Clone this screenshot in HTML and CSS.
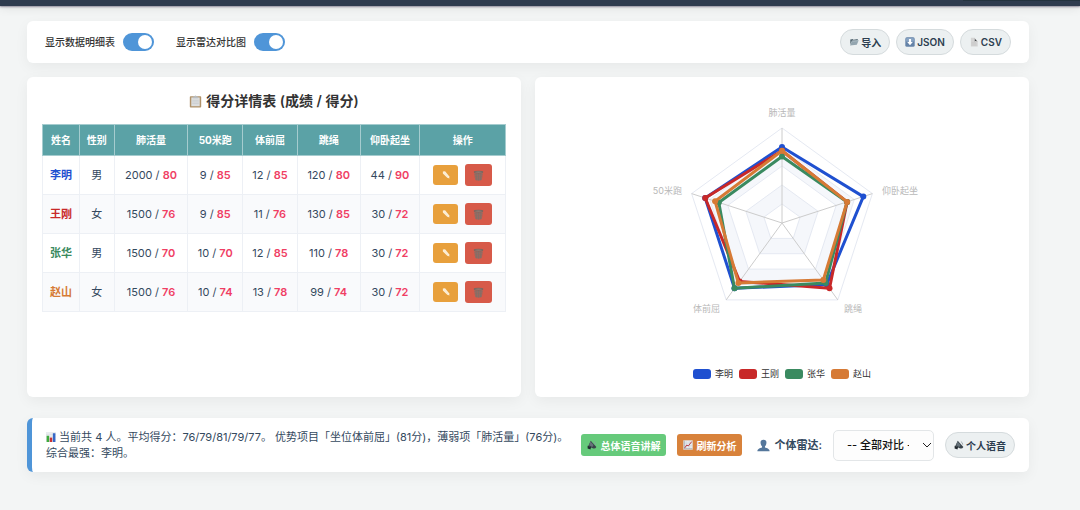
FILE: index.html
```html
<!DOCTYPE html>
<html lang="zh-CN">
<head>
  <meta charset="UTF-8">
  <meta name="viewport" content="width=device-width, initial-scale=1.0">
  <title>得分详情表</title>
  <link rel="stylesheet" href="styles.css">
</head>
<body>
  <!-- Shared icons -->
  <svg class="sprite" aria-hidden="true">
    <symbol id="icon-folder" viewBox="0 0 16 16">
      <path d="M2 4 L6 3 L7 4.500 L14 3 V6 H5 L2 12 Z" fill="#566974"/>
      <path d="M5 6 L15.500 5 L12.500 12.500 L1.500 13.500 Z" fill="#93a5af"/>
      <path d="M5.500 6.800 L14.500 6" stroke="#c3d0d7" stroke-width="0.800"/>
    </symbol>
    <symbol id="icon-down" viewBox="0 0 16 16">
      <rect x="0.500" y="0.500" width="15" height="15" rx="2.500" fill="#6583a8"/>
      <rect x="1.500" y="1.500" width="13" height="6" rx="2" fill="#86a2c2"/>
      <path d="M6.300 3 H9.700 V8 H12.500 L8 13 L3.500 8 H6.300 Z" fill="#fff"/>
    </symbol>
    <symbol id="icon-doc" viewBox="0 0 16 16">
      <path d="M3 1 H9 L14 7 V15 H3 Z" fill="#d4d4d4"/>
      <path d="M8 1 C10 2 9.500 5 9 7 C11 6 13 6.500 14 8 Z" fill="#3f4346"/>
      <path d="M4 9 H11 M4 11 H12 M4 13 H12" stroke="#c4c4c4" stroke-width="0.800"/>
    </symbol>
    <symbol id="icon-clipboard" viewBox="0 0 16 16">
      <rect x="1" y="1.500" width="14" height="14" rx="1" fill="#b0926a"/>
      <rect x="2.800" y="3" width="10.400" height="10.800" fill="#dcdedf"/>
      <path d="M4 6.500 H12 M4 8.500 H12 M4 10.500 H12" stroke="#c3c6c9" stroke-width="0.700"/>
      <path d="M5 1.800 H6.500 Q8 -0.500 9.500 1.800 H11 V4 H5 Z" fill="#b9bdc0"/>
    </symbol>
    <symbol id="icon-pencil" viewBox="0 0 16 16">
      <path d="M3 2.500 L6.500 2 L13 10 L13.500 13.500 L10 12.500 L3 5.500 Z" fill="#fdf0da"/>
      <path d="M5 4 L11.500 11.500" stroke="#f7e2bd" stroke-width="0.800"/>
    </symbol>
    <symbol id="icon-trash" viewBox="0 0 16 16">
      <path d="M1.500 3 H14.500 L12.800 14.500 Q8 16.500 3.200 14.500 Z" fill="#a5685e"/>
      <path d="M4.500 4.500 L5.300 15 M8 5 V15.500 M11.500 4.500 L10.700 15 M2 7 H14 M2.500 10 H13.500 M3 13 H13" stroke="#7d716b" stroke-width="1" fill="none"/>
      <ellipse cx="8" cy="3" rx="7" ry="2" fill="#75665f"/>
      <ellipse cx="8" cy="3" rx="5.200" ry="0.900" fill="#9b7c73"/>
    </symbol>
    <symbol id="icon-bars" viewBox="0 0 16 16">
      <rect width="16" height="16" fill="#e9ecef"/>
      <path d="M0 4 H16 M0 8 H16 M0 12 H16" stroke="#d2d7dc" stroke-width="0.600"/>
      <rect x="1" y="6" width="4" height="10" fill="#3eab3d"/>
      <rect x="6" y="9" width="4" height="7" fill="#c93434"/>
      <rect x="11" y="2" width="4" height="14" fill="#3568c9"/>
    </symbol>
    <symbol id="icon-speaker" viewBox="0 0 16 16">
      <path d="M6 1 L15 11 Q13 14.500 9 13 L2 9.500 Z" fill="#3a444b"/>
      <path d="M5.500 2.500 L10.500 8 L8.500 11 L3.500 8.500 Z" fill="#66727a"/>
      <path d="M1 9 L6.500 11 L5.500 15 L1 13.500 Z" fill="#20282e"/>
      <path d="M11 2.500 Q14 4 14 7.500" stroke="#8f9a9f" stroke-width="1.300" fill="none"/>
    </symbol>
    <symbol id="icon-trend" viewBox="0 0 16 16">
      <rect x="0.500" y="0.500" width="15" height="15" fill="#e6e9ec"/>
      <path d="M1 5 H15 M1 9 H15 M5 1 V15 M10 1 V15" stroke="#c5cbd1" stroke-width="0.600"/>
      <path d="M2 1 V14 H15" stroke="#8d959c" stroke-width="1" fill="none"/>
      <path d="M2.500 13 L6 8 L8.500 9.500 L14 2.500" stroke="#b9343c" stroke-width="1.500" fill="none"/>
    </symbol>
    <symbol id="icon-person" viewBox="0 0 16 16">
      <path d="M8 1 C11 1 12 3 11.500 5.500 C11.200 7.500 10.500 8.300 9.800 9 V10.500 C12.500 11.500 15.500 12 15.500 15 H0.500 C0.500 12 3.500 11.500 6.200 10.500 V9 C5.500 8.300 4.800 7.500 4.500 5.500 C4 3 5 1 8 1 Z" fill="#55779b"/>
    </symbol>
  </svg>

  <header class="topbar"><span class="topbar-edge"></span></header>

  <main class="container">
    <!-- Toolbar -->
    <section class="card toolbar">
      <label class="toggle">显示数据明细表<input type="checkbox" class="switch" checked></label>
      <label class="toggle">显示雷达对比图<input type="checkbox" class="switch" checked></label>
      <div class="toolbar-actions">
        <button type="button" class="pill"><svg class="icon"><use href="#icon-folder"/></svg>导入</button>
        <button type="button" class="pill"><svg class="icon"><use href="#icon-down"/></svg>JSON</button>
        <button type="button" class="pill"><svg class="icon"><use href="#icon-doc"/></svg>CSV</button>
      </div>
    </section>

    <div class="panels">
      <!-- Score table -->
      <section class="card panel">
        <h2><svg class="icon icon-title"><use href="#icon-clipboard"/></svg>得分详情表 (成绩 / 得分)</h2>
        <table>
          <colgroup>
            <col class="col-name"><col class="col-sex"><col class="col-lung"><col class="col-run">
            <col class="col-bend"><col class="col-rope"><col class="col-situp"><col class="col-actions">
          </colgroup>
          <thead>
            <tr><th>姓名</th><th>性别</th><th>肺活量</th><th>50米跑</th><th>体前屈</th><th>跳绳</th><th>仰卧起坐</th><th>操作</th></tr>
          </thead>
          <tbody>
            <tr>
              <td class="name blue">李明</td><td>男</td>
              <td>2000 / <b>80</b></td><td>9 / <b>85</b></td><td>12 / <b>85</b></td><td>120 / <b>80</b></td><td>44 / <b>90</b></td>
              <td><div class="actions">
                <button type="button" class="edit" aria-label="编辑"><svg class="icon"><use href="#icon-pencil"/></svg></button>
                <button type="button" class="delete" aria-label="删除"><svg class="icon icon-trash"><use href="#icon-trash"/></svg></button>
              </div></td>
            </tr>
            <tr>
              <td class="name red">王刚</td><td>女</td>
              <td>1500 / <b>76</b></td><td>9 / <b>85</b></td><td>11 / <b>76</b></td><td>130 / <b>85</b></td><td>30 / <b>72</b></td>
              <td><div class="actions">
                <button type="button" class="edit" aria-label="编辑"><svg class="icon"><use href="#icon-pencil"/></svg></button>
                <button type="button" class="delete" aria-label="删除"><svg class="icon icon-trash"><use href="#icon-trash"/></svg></button>
              </div></td>
            </tr>
            <tr>
              <td class="name green">张华</td><td>男</td>
              <td>1500 / <b>70</b></td><td>10 / <b>70</b></td><td>12 / <b>85</b></td><td>110 / <b>78</b></td><td>30 / <b>72</b></td>
              <td><div class="actions">
                <button type="button" class="edit" aria-label="编辑"><svg class="icon"><use href="#icon-pencil"/></svg></button>
                <button type="button" class="delete" aria-label="删除"><svg class="icon icon-trash"><use href="#icon-trash"/></svg></button>
              </div></td>
            </tr>
            <tr>
              <td class="name orange">赵山</td><td>女</td>
              <td>1500 / <b>76</b></td><td>10 / <b>74</b></td><td>13 / <b>78</b></td><td>99 / <b>74</b></td><td>30 / <b>72</b></td>
              <td><div class="actions">
                <button type="button" class="edit" aria-label="编辑"><svg class="icon"><use href="#icon-pencil"/></svg></button>
                <button type="button" class="delete" aria-label="删除"><svg class="icon icon-trash"><use href="#icon-trash"/></svg></button>
              </div></td>
            </tr>
          </tbody>
        </table>
      </section>

      <!-- Radar chart -->
      <section class="card panel">
        <svg class="radar" viewBox="-232 -131 464 270" role="img" aria-label="雷达对比图">
          <g class="rings">
            <polygon points="0,-95 -90.4,-29.4 -55.8,76.9 55.8,76.9 90.4,-29.4"/>
            <polygon class="shade" points="0,-76 -72.3,-23.5 -44.7,61.5 44.7,61.5 72.3,-23.5"/>
            <polygon points="0,-57 -54.2,-17.6 -33.5,46.1 33.5,46.1 54.2,-17.6"/>
            <polygon class="shade" points="0,-38 -36.1,-11.7 -22.3,30.7 22.3,30.7 36.1,-11.7"/>
            <polygon points="0,-19 -18.1,-5.9 -11.2,15.4 11.2,15.4 18.1,-5.9"/>
          </g>
          <path class="axes" d="M0 0 V-95 M0 0 L-90.4 -29.4 M0 0 L-55.8 76.9 M0 0 L55.8 76.9 M0 0 L90.4 -29.4"/>
          <g class="axis-names">
            <text x="0" y="-107" text-anchor="middle">肺活量</text>
            <text x="-100" y="-29" text-anchor="end">50米跑</text>
            <text x="-62" y="89" text-anchor="end">体前屈</text>
            <text x="62" y="89">跳绳</text>
            <text x="100" y="-29">仰卧起坐</text>
          </g>
          <g class="series blue">
            <polygon points="0,-76 -76.8,-25 -47.5,65.3 44.7,61.5 81.3,-26.4"/>
            <circle cx="0" cy="-76" r="3"/><circle cx="-76.8" cy="-25" r="3"/><circle cx="-47.5" cy="65.3" r="3"/><circle cx="44.7" cy="61.5" r="3"/><circle cx="81.3" cy="-26.4" r="3"/>
          </g>
          <g class="series red">
            <polygon points="0,-72.2 -76.8,-25 -42.4,58.4 47.5,65.3 65.1,-21.1"/>
            <circle cx="0" cy="-72.2" r="3"/><circle cx="-76.8" cy="-25" r="3"/><circle cx="-42.4" cy="58.4" r="3"/><circle cx="47.5" cy="65.3" r="3"/><circle cx="65.1" cy="-21.1" r="3"/>
          </g>
          <g class="series green">
            <polygon points="0,-66.5 -63.2,-20.5 -47.5,65.3 43.6,59.9 65.1,-21.1"/>
            <circle cx="0" cy="-66.5" r="3"/><circle cx="-63.2" cy="-20.5" r="3"/><circle cx="-47.5" cy="65.3" r="3"/><circle cx="43.6" cy="59.9" r="3"/><circle cx="65.1" cy="-21.1" r="3"/>
          </g>
          <g class="series orange">
            <polygon points="0,-72.2 -66.9,-21.7 -43.6,59.9 41.3,56.9 65.1,-21.1"/>
            <circle cx="0" cy="-72.2" r="3"/><circle cx="-66.9" cy="-21.7" r="3"/><circle cx="-43.6" cy="59.9" r="3"/><circle cx="41.3" cy="56.9" r="3"/><circle cx="65.1" cy="-21.1" r="3"/>
          </g>
        </svg>
        <ul class="legend">
          <li><span class="swatch blue"></span>李明</li>
          <li><span class="swatch red"></span>王刚</li>
          <li><span class="swatch green"></span>张华</li>
          <li><span class="swatch orange"></span>赵山</li>
        </ul>
      </section>
    </div>

    <!-- Analysis -->
    <section class="card analysis">
      <p><svg class="icon"><use href="#icon-bars"/></svg> 当前共 4 人。平均得分：76/79/81/79/77。 优势项目「坐位体前屈」(81分)，薄弱项「肺活量」(76分)。<br>综合最强：李明。</p>
      <div class="analysis-actions">
        <button type="button" class="btn btn-voice"><svg class="icon"><use href="#icon-speaker"/></svg>总体语音讲解</button>
        <button type="button" class="btn btn-refresh"><svg class="icon"><use href="#icon-trend"/></svg>刷新分析</button>
        <label class="select-label" for="studentSelect"><svg class="icon icon-title"><use href="#icon-person"/></svg>个体雷达:</label>
        <div class="select-box">
          <select id="studentSelect">
            <option>-- 全部对比 --</option>
            <option>李明</option>
            <option>王刚</option>
            <option>张华</option>
            <option>赵山</option>
          </select>
          <svg class="chevron" viewBox="0 0 10 10"><path d="M1 3 L5 7 L9 3"/></svg>
        </div>
        <button type="button" class="pill"><svg class="icon"><use href="#icon-speaker"/></svg>个人语音</button>
      </div>
    </section>
  </main>
</body>
</html>
```

FILE: styles.css
```css
* {
  box-sizing: border-box;
}
body {
  margin: 0;
  background-color: #f3f5f5;
  color: #34495e;
  font-family: Inter, "Noto Sans CJK SC", sans-serif;
  font-size: 11px;
  line-height: 16px;
}
button, select, input {
  font-family: inherit;
  margin: 0;
}
button {
  cursor: pointer;
}
.sprite {
  display: none;
}
.icon {
  width: 10px;
  height: 10px;
  flex: none;
}
.icon-title {
  width: 13px;
  height: 13px;
}
.icon-trash {
  width: 11px;
  height: 11px;
}
.topbar {
  display: flex;
  justify-content: flex-end;
  height: 6px;
  background-color: #2f3c4f;
  box-shadow: 0 1px 2px rgba(60, 50, 80, 0.5), 0 2px 10px rgba(0, 0, 0, 0.1);
}
.topbar-edge {
  width: 117px;
  height: 1px;
  background-color: #24333f;
}
.container {
  padding: 15px 51px 38px 27px;
}
.card {
  background-color: #fff;
  border-radius: 6px;
  box-shadow: 0 4px 14px rgba(0, 0, 0, 0.05);
}

/* Toolbar */
.toolbar {
  display: flex;
  align-items: center;
  gap: 22px;
  padding: 8px 18px;
  margin-bottom: 14px;
}
.toggle {
  display: flex;
  align-items: center;
  gap: 8px;
  color: #333;
  font-size: 10px;
  font-weight: 500;
}
.switch {
  appearance: none;
  width: 31px;
  height: 18px;
  padding: 2px;
  border-radius: 9px;
  background-color: #bbb;
}
.switch::before {
  content: "";
  display: block;
  width: 14px;
  height: 14px;
  border-radius: 50%;
  background-color: #fff;
}
.switch:checked {
  background-color: #4f95d8;
}
.switch:checked::before {
  margin-left: auto;
}
.toolbar-actions {
  display: flex;
  gap: 6px;
  margin-left: auto;
}
.pill {
  display: flex;
  align-items: center;
  gap: 2px;
  height: 26px;
  padding: 0 8px;
  border: 1px solid #d5dbdd;
  border-radius: 13px;
  background-color: #ecf0f1;
  color: #2c3e50;
  font-size: 10px;
  font-weight: 600;
  white-space: nowrap;
}

/* Panels */
.panels {
  display: grid;
  grid-template-columns: 1fr 1fr;
  gap: 14px;
  margin-bottom: 21px;
}
.panel {
  min-height: 320px;
  padding: 15px;
}
h2 {
  display: flex;
  align-items: center;
  justify-content: center;
  gap: 4px;
  margin: 0 0 14px;
  color: #333;
  font-size: 14px;
  font-weight: 600;
  line-height: 18px;
}
table {
  width: 100%;
  border-collapse: collapse;
  text-align: center;
}
.col-name { width: 37px; }
.col-sex { width: 35px; }
.col-lung { width: 74px; }
.col-run { width: 55px; }
.col-bend { width: 55px; }
.col-rope { width: 63px; }
.col-situp { width: 60px; }
.col-actions { width: 86px; }
th, td {
  padding: 0;
  border: 1px solid #edf0f5;
  white-space: nowrap;
}
th {
  height: 31px;
  border-color: #a5cccf;
  background-color: #5ba2a6;
  color: #fff;
  font-size: 10px;
  font-weight: 700;
}
td {
  height: 39px;
}
tbody tr:nth-child(even) {
  background-color: #f9fafc;
}
td b {
  color: #f03e64;
  font-weight: 600;
}
.name {
  font-weight: 700;
}
.name.blue { color: #1f50d0; }
.name.red { color: #c82828; }
.name.green { color: #3a8a60; }
.name.orange { color: #d67a35; }
.actions {
  display: flex;
  align-items: center;
  justify-content: center;
  gap: 7px;
}
.edit, .delete {
  display: flex;
  align-items: center;
  justify-content: center;
  padding: 0;
  border: none;
  border-radius: 3px;
}
.edit {
  width: 25px;
  height: 20px;
  background-color: #e8a03c;
}
.delete {
  width: 27px;
  height: 22px;
  background-color: #d75a49;
}

/* Radar chart */
.radar {
  display: block;
  width: 100%;
  height: 270px;
}
.rings polygon {
  fill: #fff;
  stroke: #e5e9f2;
}
.rings .shade {
  fill: #f5f7fb;
}
.axes {
  fill: none;
  stroke: #ccc;
}
.axis-names text {
  fill: #b8b8b8;
  font-size: 9px;
}
.series polygon {
  fill: none;
  stroke-width: 3;
  stroke-linejoin: bevel;
}
.series.blue { stroke: #1f50d0; fill: #1f50d0; }
.series.red { stroke: #c82828; fill: #c82828; }
.series.green { stroke: #3a8a60; fill: #3a8a60; }
.series.orange { stroke: #d67a35; fill: #d67a35; }
.series circle {
  stroke: none;
}
.legend {
  display: flex;
  justify-content: center;
  gap: 6px;
  margin: 4px 0 0;
  padding: 0;
  list-style: none;
  color: #333;
  font-size: 9px;
}
.legend li {
  display: flex;
  align-items: center;
  gap: 4px;
}
.swatch {
  width: 18px;
  height: 10px;
  border-radius: 3px;
}
.swatch.blue { background-color: #1f50d0; }
.swatch.red { background-color: #c82828; }
.swatch.green { background-color: #3a8a60; }
.swatch.orange { background-color: #d67a35; }

/* Analysis */
.analysis {
  display: flex;
  align-items: center;
  justify-content: space-between;
  gap: 4px;
  padding: 11px 14px;
  border-left: 5px solid #4f95d8;
}
.analysis p {
  margin: 0;
}
.analysis p .icon {
  vertical-align: -1px;
}
.analysis-actions {
  display: flex;
  align-items: center;
  flex: none;
  gap: 11px;
}
.btn {
  display: flex;
  align-items: center;
  gap: 3px;
  height: 22px;
  padding: 0 6px;
  border: none;
  border-radius: 3px;
  color: #fff;
  font-size: 10px;
  font-weight: 700;
  white-space: nowrap;
}
.btn-voice {
  background-color: #66ca7b;
}
.btn-refresh {
  background-color: #d8823b;
}
.select-label {
  display: flex;
  align-items: center;
  gap: 4px;
  margin-left: 4px;
  font-weight: 600;
  white-space: nowrap;
}
.select-box {
  position: relative;
}
select {
  display: block;
  appearance: none;
  width: 101px;
  height: 31px;
  padding: 0 24px 0 13px;
  border: 1px solid #e3e6e8;
  border-radius: 5px;
  background-color: #fdfdfd;
  color: #111;
  font-size: 11px;
  font-weight: 500;
}
.chevron {
  position: absolute;
  top: 10px;
  right: 2px;
  width: 10px;
  height: 10px;
  fill: none;
  stroke: #222;
  pointer-events: none;
}
```
